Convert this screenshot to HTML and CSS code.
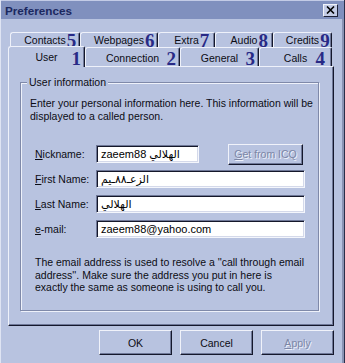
FILE: index.html
```html
<!DOCTYPE html>
<html>
<head>
<meta charset="utf-8">
<title>Preferences</title>
<link rel="stylesheet" href="styles.css">
</head>
<body>
<div class="window">
  <div class="titlebar">
    <span class="title">Preferences</span>
    <span class="close"><svg width="9" height="8" viewBox="0 0 9 8"><path d="M1 0.5 L8 7.5 M8 0.5 L1 7.5" stroke="#000" stroke-width="1.6" fill="none"/></svg></span>
  </div>
  <div class="tabs">
    <div class="tabrow back">
      <div class="tab t-contacts"><span class="lbl">Contacts</span><span class="num">5</span></div>
      <div class="tab t-webpages"><span class="lbl">Webpages</span><span class="num">6</span></div>
      <div class="tab t-extra"><span class="lbl">Extra</span><span class="num">7</span></div>
      <div class="tab t-audio"><span class="lbl">Audio</span><span class="num">8</span></div>
      <div class="tab t-credits"><span class="lbl">Credits</span><span class="num">9</span></div>
    </div>
    <div class="tabrow front">
      <div class="tab t-user active"><span class="lbl">User</span><span class="num">1</span></div>
      <div class="tab t-connection"><span class="lbl">Connection</span><span class="num">2</span></div>
      <div class="tab t-general"><span class="lbl">General</span><span class="num">3</span></div>
      <div class="tab t-calls"><span class="lbl">Calls</span><span class="num">4</span></div>
    </div>
  </div>
  <div class="panel">
    <fieldset class="group">
      <legend>User information</legend>
      <p class="intro">Enter your personal information here. This information will be<br>displayed to a called person.</p>
      <div class="form">
        <div class="row">
          <label class="lab"><u>N</u>ickname:</label>
          <div class="field short">zaeem88 الهلالي</div>
          <button class="btn icq" disabled><u>G</u>et from ICQ</button>
        </div>
        <div class="row">
          <label class="lab"><u>F</u>irst Name:</label>
          <div class="field long">الزعـ٨٨ـيم</div>
        </div>
        <div class="row">
          <label class="lab"><u>L</u>ast Name:</label>
          <div class="field long">الهلالي</div>
        </div>
        <div class="row">
          <label class="lab"><u>e</u>-mail:</label>
          <div class="field long">zaeem88@yahoo.com</div>
        </div>
      </div>
      <p class="note">The email address is used to resolve a ''call through email<br>address''. Make sure the address you put in here is<br>exactly the same as someone is using to call you.</p>
    </fieldset>
  </div>
  <div class="actions">
    <button class="btn">OK</button>
    <button class="btn">Cancel</button>
    <button class="btn" disabled><u>A</u>pply</button>
  </div>
</div>
</body>
</html>
```

FILE: styles.css
```css
* { box-sizing: border-box; }

body {
  margin: 0;
  background: #b8c3e0;
  font-family: "Liberation Sans", "DejaVu Sans", Arial, sans-serif;
  font-size: 10.5px;
  color: #0c0c14;
}

.window {
  width: 345px;
  height: 363px;
  background: #b8c3e0;
  border-left: 1px solid #dfe4f3;
  border-right: 1px solid #2a2f4a;
  box-shadow: inset -2px 0 0 #8a94b4;
  display: flex;
  flex-direction: column;
}

/* Title bar */
.titlebar {
  height: 19px;
  background: #8090be;
  border-top: 1px solid #c3cbe6;
  display: flex;
  align-items: center;
  justify-content: space-between;
  padding: 0 6px 0 4px;
}

.title {
  font-weight: bold;
  font-size: 11.7px;
  color: #1b2860;
}

.close {
  width: 15px;
  height: 13px;
  background: #c4cce6;
  border-top: 1px solid #f2f4fb;
  border-left: 1px solid #f2f4fb;
  border-right: 1px solid #1e2238;
  border-bottom: 1px solid #1e2238;
  display: flex;
  align-items: center;
  justify-content: center;
}

/* Tabs */
.tabs {
  margin-top: 13px;
  padding-left: 7px;
}

.tabrow {
  display: flex;
}

.tabrow.back {
  height: 15px;
  margin-left: 2px;
}

.tabrow.front {
  height: 19px;
}

.tab {
  display: grid;
  grid-template-columns: 1fr auto 1fr;
  align-items: center;
  border-top: 1px solid #eef1fa;
  border-left: 1px solid #eef1fa;
  border-right: 1px solid #15182c;
  box-shadow: inset -1px 0 0 #6f7898;
  border-top-left-radius: 3px;
  border-top-right-radius: 2px;
  background: #b8c3e0;
}

.lbl {
  grid-column: 2;
  white-space: nowrap;
  line-height: 13px;
}

.num {
  grid-column: 3;
  font-family: "Liberation Serif", "DejaVu Serif", serif;
  font-weight: bold;
  font-size: 19px;
  line-height: 13px;
  color: #282a86;
}

.back .num {
  justify-self: start;
  margin-left: 1px;
}

.front .num {
  justify-self: end;
  margin-right: 3px;
  padding-top: 3px;
}

.front .lbl {
  padding-top: 2px;
}

.t-contacts { width: 70px; }
.t-webpages { width: 78px; }
.t-extra { width: 57px; }
.t-audio { width: 58px; }
.t-credits { width: 59px; }

.t-user { width: 77px; }
.t-connection { width: 95px; }
.t-general { width: 79px; }
.t-calls { width: 73px; }
.t-calls .num { margin-right: 6px; }

.tab.active {
  margin-top: -1px;
  height: 21px;
  margin-bottom: -1px;
  position: relative;
  z-index: 1;
}

.tab.active .lbl {
  padding-top: 0;
}

/* Panel */
.panel {
  margin: 0 10px 0 7px;
  height: 260px;
  border-top: 1px solid #eef1fa;
  border-left: 1px solid #eef1fa;
  border-right: 1px solid #15182c;
  border-bottom: 1px solid #15182c;
  box-shadow: inset -1px -1px 0 #6f7898;
  padding: 9px 14px 0 11px;
}

.group {
  margin: 0;
  padding: 0 0 16px 9px;
  border: 1px solid #7f89a9;
  box-shadow: inset 1px 1px 0 #eef1fa, 1px 1px 0 #eef1fa;
  height: 235px;
}

.group legend {
  margin-left: -3px;
  padding: 0 2px;
  line-height: 12px;
  background: #b8c3e0;
}

.intro {
  margin: 9px 0 0;
  line-height: 12.5px;
}

.form {
  margin: 23px 0 0 5px;
  width: 270px;
  display: flex;
  flex-direction: column;
  gap: 7px;
}

.row {
  height: 18px;
  display: flex;
  align-items: center;
}

.lab {
  width: 61px;
  flex: none;
}

.field {
  height: 18px;
  background: #fff;
  border-top: 1px solid #6e7797;
  border-left: 1px solid #6e7797;
  border-right: 1px solid #f4f6fc;
  border-bottom: 1px solid #f4f6fc;
  box-shadow: inset 1px 1px 0 #14172a, inset -1px -1px 0 #d4d9ea;
  padding: 0 4px;
  line-height: 16px;
  white-space: nowrap;
  font-size: 11px;
  color: #000;
}

.field.short { width: 103px; }
.field.long { width: 209px; }

.btn {
  font-family: inherit;
  font-size: 10.5px;
  color: #0c0c14;
  background: #b8c3e0;
  border-top: 1px solid #f0f2fa;
  border-left: 1px solid #f0f2fa;
  border-right: 1px solid #15182c;
  border-bottom: 1px solid #15182c;
  box-shadow: inset -1px -1px 0 #6f7898;
  padding: 0;
}

.btn:disabled {
  color: #7c86a6;
  text-shadow: 1px 1px 0 #eef1fa;
}

.icq {
  margin-left: auto;
  margin-right: 2px;
  width: 75px;
  height: 21px;
  flex: none;
}

.note {
  margin: 18px 0 0 5px;
  line-height: 12.5px;
}

/* Bottom buttons */
.actions {
  margin-top: 4px;
  display: flex;
  justify-content: flex-end;
  gap: 8px;
  padding-right: 10px;
}

.actions .btn {
  width: 73px;
  height: 25px;
}
```
